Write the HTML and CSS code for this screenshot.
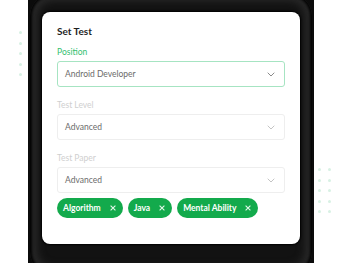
FILE: index.html
```html
<!DOCTYPE html>
<html>
<head>
<meta charset="utf-8">
<link rel="stylesheet" href="styles.css">
</head>
<body>
<div class="stage">
  <div class="dots dots-left">
    <i></i><i></i><i></i><i></i><i></i>
  </div>
  <div class="frame">
    <div class="bezel">
      <div class="card">
        <h1 class="title">Set Test</h1>
        <div class="field">
          <div class="label label-active">Position</div>
          <div class="select select-active">
            <span>Android Developer</span>
            <svg class="chev" width="8" height="5" viewBox="0 0 8 5"><path d="M0.7 0.7 L4 4 L7.3 0.7" fill="none" stroke="#8a8a8a" stroke-width="1"/></svg>
          </div>
        </div>
        <div class="field">
          <div class="label">Test Level</div>
          <div class="select">
            <span>Advanced</span>
            <svg class="chev" width="8" height="5" viewBox="0 0 8 5"><path d="M0.7 0.7 L4 4 L7.3 0.7" fill="none" stroke="#c4c4c4" stroke-width="1"/></svg>
          </div>
        </div>
        <div class="field">
          <div class="label">Test Paper</div>
          <div class="select">
            <span>Advanced</span>
            <svg class="chev" width="8" height="5" viewBox="0 0 8 5"><path d="M0.7 0.7 L4 4 L7.3 0.7" fill="none" stroke="#c4c4c4" stroke-width="1"/></svg>
          </div>
        </div>
        <div class="chips">
          <span class="chip">Algorithm <svg width="6" height="6" viewBox="0 0 6 6"><path d="M0.6 0.6 L5.4 5.4 M5.4 0.6 L0.6 5.4" stroke="#e6f7ec" stroke-width="1.1"/></svg></span>
          <span class="chip">Java <svg width="6" height="6" viewBox="0 0 6 6"><path d="M0.6 0.6 L5.4 5.4 M5.4 0.6 L0.6 5.4" stroke="#e6f7ec" stroke-width="1.1"/></svg></span>
          <span class="chip">Mental Ability <svg width="6" height="6" viewBox="0 0 6 6"><path d="M0.6 0.6 L5.4 5.4 M5.4 0.6 L0.6 5.4" stroke="#e6f7ec" stroke-width="1.1"/></svg></span>
        </div>
      </div>
    </div>
  </div>
  <div class="dots dots-right">
    <i></i><i></i><i></i><i></i><i></i><i></i><i></i><i></i><i></i><i></i>
  </div>
</div>
</body>
</html>
```
FILE: styles.css
```css
* { box-sizing: border-box; }
html, body { margin: 0; padding: 0; background: #fff; }
body {
  width: 350px;
  height: 263px;
  overflow: hidden;
  font-family: Lato, "Open Sans", sans-serif;
}
.stage {
  display: flex;
  height: 263px;
}
.dots {
  display: grid;
}
.dots i {
  width: 3px;
  height: 3px;
  border-radius: 50%;
  background: #d8f1e4;
  display: block;
}
.dots-left {
  width: 28px;
  padding: 31px 0 0 19px;
  grid-template-columns: 3px;
  grid-auto-rows: 3px;
  row-gap: 7.5px;
  align-content: start;
}
.frame {
  width: 286px;
  height: 263px;
  background: #0b0b0b;
}
.bezel {
  margin: -6px 2px 0 2px;
  height: 280px;
  border-radius: 22px;
  background: #121212;
  box-shadow: inset 0 0 3px 2px #000, inset 0 0 10px 6px #2e2e2e;
  padding: 18px 12px 0 12px;
}
.card {
  width: 258px;
  height: 232px;
  background: #fff;
  border-radius: 8px;
  padding: 13px 15px 0 15px;
  box-shadow: 0 0 2px 1px #000;
}
.title {
  margin: 0;
  font-size: 10px;
  font-weight: 700;
  color: #1f1f1f;
  line-height: 12px;
}
.field { margin-top: 10px; }
.field + .field { margin-top: 13px; }
.label {
  font-size: 8.5px;
  line-height: 11px;
  color: #cfcfcf;
  margin-bottom: 3px;
}
.label-active { color: #34c06f; }
.select {
  height: 26px;
  border: 1px solid #eeeeee;
  border-radius: 3px;
  display: flex;
  align-items: center;
  justify-content: space-between;
  padding: 0 9px 0 7px;
  font-size: 8.5px;
  color: #6b6b6b;
}
.select-active { border-color: #a6e4c2; }
.chev { display: block; }
.chips {
  display: flex;
  gap: 5px;
  margin-top: 5px;
}
.chip {
  height: 20px;
  border-radius: 10px;
  background: #13aa4c;
  color: #fff;
  font-size: 8.5px;
  font-weight: 700;
  display: flex;
  align-items: center;
  gap: 9px;
  padding: 0 7px 0 6px;
}
.chip svg { display: block; }
.dots-right {
  padding: 168px 0 0 4px;
  grid-template-columns: 3px 3px;
  column-gap: 7px;
  grid-auto-rows: 3px;
  row-gap: 7.5px;
  align-content: start;
}
```
